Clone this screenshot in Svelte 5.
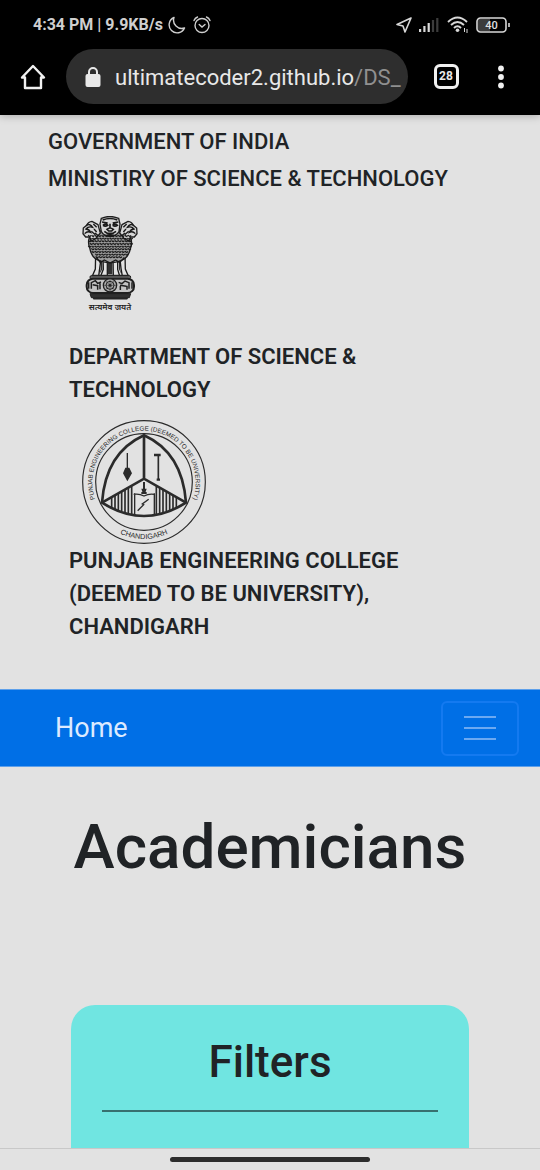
<script>
  const signal = [3, 6, 9, 12, 14];
  const maneRows = [];
  for (let y = 92; y < 160; y += 8) {
    const inset = Math.max(0, y - 126) * 0.75;
    for (let x = 59 + inset; x < 184 - inset; x += 10) {
      maneRows.push({ x: x + (((y - 92) / 8) % 2) * 5, y });
    }
  }
  const slatsLeft = [112, 122, 132, 142, 152, 162, 172];
  const slatsRight = [246, 256, 266, 276, 286, 296, 306];
</script>

<div class="screen">
  <header class="browser">
    <div class="status">
      <div class="status-side">
        <span class="clock">4:34 PM | 9.9KB/s</span>
        <svg width="18" height="18" viewBox="0 0 18 18" aria-hidden="true">
          <path d="M6 1.5 A8 8 0 1 0 16.5 12 A8.300 8.300 0 0 1 6 1.500Z" fill="none" stroke="#cfcfcf" stroke-width="1.400" stroke-linejoin="round" />
        </svg>
        <svg width="18" height="18" viewBox="0 0 18 18" fill="none" stroke="#cfcfcf" stroke-width="1.400" stroke-linecap="round" aria-hidden="true">
          <circle cx="9" cy="9.500" r="7" />
          <path d="M1 4.500Q2 2 4.500 1M17 4.500Q16 2 13.500 1M6.200 8.500L9 11L12 8.500" />
        </svg>
      </div>
      <div class="status-side right">
        <svg width="16" height="16" viewBox="0 0 16 16" aria-hidden="true">
          <path d="M15 1L1 7.500L7 9L9 15Z" fill="none" stroke="#d8d8d8" stroke-width="1.600" stroke-linejoin="round" />
        </svg>
        <svg width="21" height="16" viewBox="0 0 21 16" aria-hidden="true">
          {#each signal as h, i}
            <rect x={i * 4.3} y={15 - h} width="2.200" height={h} fill={i < 3 ? '#d8d8d8' : '#3c3c3c'} />
          {/each}
        </svg>
        <svg width="22" height="18" viewBox="0 0 22 18" aria-hidden="true">
          <path d="M1 6Q10.500 -3 20 6M4 9Q10.500 3 17 9M7 12Q10.500 8.500 14 12" fill="none" stroke="#d8d8d8" stroke-width="1.900" />
          <circle cx="10.500" cy="14.200" r="1.800" fill="#d8d8d8" />
          <path d="M17.500 12v4M20 13v4" stroke="#d8d8d8" stroke-width="1" />
        </svg>
        <svg width="34" height="16" viewBox="0 0 34 16" aria-hidden="true">
          <rect x="2" y="2" width="12" height="12" fill="#3c3c3c" />
          <rect x="1" y="1" width="29" height="14" rx="3.500" fill="none" stroke="#d8d8d8" stroke-width="1.600" />
          <path d="M33 6v4" stroke="#d8d8d8" stroke-width="1.600" />
          <text x="15.500" y="12" text-anchor="middle" font-size="11" font-weight="500" fill="#e0e0e0">40</text>
        </svg>
      </div>
    </div>
    <div class="toolbar">
      <button class="icon" aria-label="Home page">
        <svg width="26" height="26" viewBox="0 0 26 26">
          <path d="M2 13.500L13 2L24 13.500H21V24H5V13.500Z" fill="none" stroke="#f1f1f1" stroke-width="2.400" stroke-linejoin="round" />
        </svg>
      </button>
      <button class="address">
        <svg width="16" height="20" viewBox="0 0 16 20" aria-hidden="true">
          <path d="M4 8V5a4 4 0 0 1 8 0V8" fill="none" stroke="#e8e8e8" stroke-width="2" />
          <rect x="0.500" y="7" width="15" height="13" rx="2" fill="#e8e8e8" />
        </svg>
        <span class="url">ultimatecoder2.github.io<span class="path">/DS_</span></span>
      </button>
      <button class="icon"><span class="tabs">28</span></button>
      <button class="icon more" aria-label="Menu">
        <svg width="6" height="24" viewBox="0 0 6 24" fill="#f1f1f1">
          <circle cx="3" cy="3.500" r="2.900" /><circle cx="3" cy="12" r="2.900" /><circle cx="3" cy="20.500" r="2.900" />
        </svg>
      </button>
    </div>
  </header>

  <main>
    <section class="masthead">
      <p class="gov">GOVERNMENT OF INDIA</p>
      <p class="gov">MINISTIRY OF SCIENCE &amp; TECHNOLOGY</p>
      <svg class="emblem" width="56" height="96" viewBox="36 33 168 288" role="img" aria-label="State Emblem of India">
        <g fill="#e2e2e2" stroke="#1a1a1a" stroke-width="4">
          <path d="M77 148L76 192L67 213H86L89 190L94 155ZM99 155L100 193L92 213H112L112 160ZM129 160L130 213H149L143 193L143 155ZM149 155L153 190L157 213H175L166 192L165 148Z" />
        </g>
        <path d="M93 166L92 193L88 208L97 193V166ZM113 166V208H127V166ZM147 166V193L154 208L150 190V166ZM65 209H178V216H65Z" fill="#303030" />
        <g fill="#d6d6d6" stroke="#1e1e1e" stroke-width="4">
          <path d="M72 78C57 92 52 110 59 128C62 149 75 164 92 168C107 175 136 175 149 168C166 164 178 149 182 128C189 110 181 92 168 78Z" fill="#9c9c9c" />
          <path d="M84 59L66 49Q55 50 50 61L40 69L39 86L47 96L59 96L63 109L79 99L91 84ZM156 59L174 49Q185 50 190 61L200 69L201 86L193 96L181 96L177 109L161 99L149 84Z" />
          <path d="M94 40Q119 29 146 40L150 57L147 80Q138 94 121 95Q102 94 94 80L90 57Z" />
        </g>
        <g fill="none" stroke="#1a1a1a" stroke-width="3.600">
          {#each maneRows as p}
            <path d={`M${p.x - 4} ${p.y - 2}q4 8 8 1`} />
          {/each}
          <path d="M48 62q12-8 20 5q-13-4-20 5q10 1 14 10q-10-5-18 4M192 62q-12-8-20 5q13-4 20 5q-10 1-14 10q10-5 18 4" stroke-width="4" />
          <path d="M70 57l10 10M64 79l12 10M72 72l8 9M75 84l10 8M170 57l-10 10M176 79l-12 10M168 72l-8 9M165 84l-10 8M79 157l12 16 12-8 17 9 17-9 12 8 14-16" stroke-width="4" />
          <path d="M98 45q22-9 44 0M96 51l17 3M145 51l-17 3M99 61q8-7 14 0q-7 5-14 0M128 61q7-7 14 0q-7 5-14 0M120 56v15M111 73q9-8 19 0l-5 5h-9ZM103 79q17 15 35 0M106 85h28M110 91h21" stroke-width="5" />
        </g>
        <g stroke="#202020">
          <rect x="60" y="212" width="122" height="9" rx="4" fill="#606060" stroke-width="3" />
          <rect x="50" y="221" width="142" height="43" rx="19" fill="#c3c3c3" stroke-width="6" />
          <circle cx="120" cy="241" r="20" fill="#aaa" stroke-width="4" />
          <circle cx="120" cy="241" r="12" fill="none" stroke-width="3" />
          <circle cx="120" cy="241" r="4" fill="#333" />
          <path d="M120 223v36M102 241h36M107 228l26 26M133 228l-26 26" stroke-width="1.500" />
          <path d="M64 251V233l12-6 7 8 10-4M68 239l15 3v12M90 235v18M177 251V233l-12-5-9 8-10-4M150 241l19 3M151 243v12M171 242v12M56 232v19M186 232v19" fill="none" stroke-width="4.500" />
          <path d="M60 266H182L178 278H64ZM70 280H172V282H70Z" fill="#303030" stroke-width="3" />
        </g>
        <text class="motto" x="120" y="315" text-anchor="middle">सत्यमेव जयते</text>
      </svg>
      <div class="organisations">
        <p>DEPARTMENT OF SCIENCE &amp;<br />TECHNOLOGY</p>
        <svg class="seal" width="124" height="124" viewBox="23 22 372 372" role="img" aria-label="Punjab Engineering College seal">
          <defs>
            <path id="seal-top" d="M62 258A155 155 0 1 1 356 258" />
            <path id="seal-bottom" d="M100 340A172 172 0 0 0 318 340" />
          </defs>
          <g fill="none" stroke="#2b2b2b">
            <circle cx="209" cy="208" r="184" stroke-width="3.500" />
            <circle cx="209" cy="208" r="145" stroke-width="3.500" />
            <path d="M209 68Q94 120 83 270Q209 350 335 270Q324 120 209 68Z" stroke-width="8" stroke-linejoin="round" />
            <path d="M209 68V198M83 270L209 198L335 270" stroke-width="8" />
            {#each slatsLeft as x}
              <path d={`M${x} ${258 - (x - 105) * 0.56}V${286 + (x - 112) * 0.3}`} stroke-width="5" />
            {/each}
            {#each slatsRight as x}
              <path d={`M${x} ${258 - (313 - x) * 0.56}V${286 + (306 - x) * 0.3}`} stroke-width="5" />
            {/each}
            <path d="M181 242V304M240 242V304M178 245Q194 242 209 250Q224 242 240 245" stroke-width="4" />
            <path d="M209 208V232M201 241H217" stroke-width="6" />
            <path d="M190 294L208 276L204 274L223 260" stroke-width="4" />
            <path d="M159 121V172" stroke-width="4" />
            <path d="M252 130V202" stroke-width="5" />
            <path d="M239 127H259M247 201H257" stroke-width="7" />
          </g>
          <path d="M153 165H165L173 182L159 206L146 182ZM201 228H217L213 240H205Z" fill="#2b2b2b" />
          <text class="ring-text"><textPath href="#seal-top" startOffset="50%" text-anchor="middle">PUNJAB ENGINEERING COLLEGE (DEEMED TO BE UNIVERSITY)</textPath></text>
          <text class="ring-text city"><textPath href="#seal-bottom" startOffset="50%" text-anchor="middle">CHANDIGARH</textPath></text>
        </svg>
        <p>PUNJAB ENGINEERING COLLEGE<br />(DEEMED TO BE UNIVERSITY),<br />CHANDIGARH</p>
      </div>
    </section>

    <nav>
      <a href="#home">Home</a>
      <button class="toggle" aria-label="Toggle navigation">
        <svg width="32" height="26" viewBox="0 0 32 26" stroke="#6ca9f2" stroke-width="2">
          <path d="M0 2H32M0 13H32M0 24H32" />
        </svg>
      </button>
    </nav>

    <h1>Academicians</h1>
    <section class="filters">
      <h2>Filters</h2>
      <hr />
    </section>
  </main>
  <footer><div class="handle"></div></footer>
</div>

<style>
  :global(body) { margin: 0; background: #e2e2e2; }
  * { box-sizing: border-box; }
  .screen { min-height: 100vh; display: flex; flex-direction: column; background: #e2e2e2; color: #202326; font-family: Roboto, sans-serif; }
  button { font: inherit; color: inherit; background: none; border: 0; padding: 0; }
  svg { display: block; flex: none; }
  .browser { background: #000; color: #e8e8e8; box-shadow: 0 1px 8px rgba(0, 0, 0, 0.25); }
  .status { height: 49px; padding: 0 30px 0 33px; display: flex; align-items: center; justify-content: space-between; }
  .status-side { display: flex; align-items: center; gap: 7px; }
  .clock { font-size: 16px; font-weight: 700; color: #cfcfcf; margin-right: -2px; }
  .toolbar { height: 66px; padding: 0 19px 11px 20px; display: flex; align-items: center; }
  .icon { width: 26px; height: 55px; display: flex; align-items: center; justify-content: center; flex: none; }
  .address { flex: 1; min-width: 0; height: 55px; margin: 0 25px 0 20px; padding: 0 5px 0 19px; border-radius: 28px; background: #2e2e2e; display: flex; align-items: center; gap: 14px; font-size: 22px; line-height: 30px; white-space: nowrap; color: #e8e8e8; text-align: left; }
  .url { padding-top: 2px; }
  .path { color: #909090; }
  .tabs { width: 25px; height: 25px; border: 3px solid #f1f1f1; border-radius: 6px; font-size: 12px; line-height: 19px; font-weight: 700; text-align: center; }
  .more { margin-left: 30px; width: 24px; margin-right: 8px; }
  main { flex: 1; display: flex; flex-direction: column; }
  .masthead { padding: 8px 48px 46px; }
  p { margin: 0; }
  .gov { font-size: 22px; font-weight: 500; line-height: 37px; }
  .emblem { margin: 19px 0 28px 34px; }
  .motto { font-family: "Noto Sans Devanagari", "Noto Sans", sans-serif; font-size: 25px; font-weight: 600; fill: #222; }
  .organisations { padding-left: 21px; font-size: 22px; font-weight: 600; line-height: 33px; }
  .seal { margin: 14px 0 0 13px; }
  .ring-text { font-family: "Liberation Sans", Arial, sans-serif; font-size: 19px; font-weight: 400; fill: #2b2b2b; }
  .ring-text.city { font-size: 22px; }
  nav { height: 78px; padding: 0 21px 0 55px; display: flex; align-items: center; justify-content: space-between; background: #006fe6; border: 1px solid #5ea0ea; border-width: 1px 0; }
  nav a { color: #dceaff; text-decoration: none; font-size: 27px; }
  .toggle { width: 78px; height: 55px; border: 2px solid #147af0; border-radius: 6px; display: flex; align-items: center; justify-content: center; }
  h1 { margin: 43px 0 0; font-size: 62px; line-height: 74px; font-weight: 500; text-align: center; }
  .filters { flex: 1; min-height: 143px; margin: 121px 71px 0; padding: 31px 31px 0; border-radius: 24px 24px 0 0; background: #70e5e1; }
  h2 { margin: 0; font-size: 44px; line-height: 53px; font-weight: 500; text-align: center; }
  hr { margin: 21px 0 0; border: 0; height: 2px; background: #37706f; }
  footer { height: 22px; border-top: 1px solid #c8c8c8; display: flex; align-items: center; justify-content: center; }
  .handle { width: 37%; height: 5px; border-radius: 3px; background: #2d2d2d; }
</style>
